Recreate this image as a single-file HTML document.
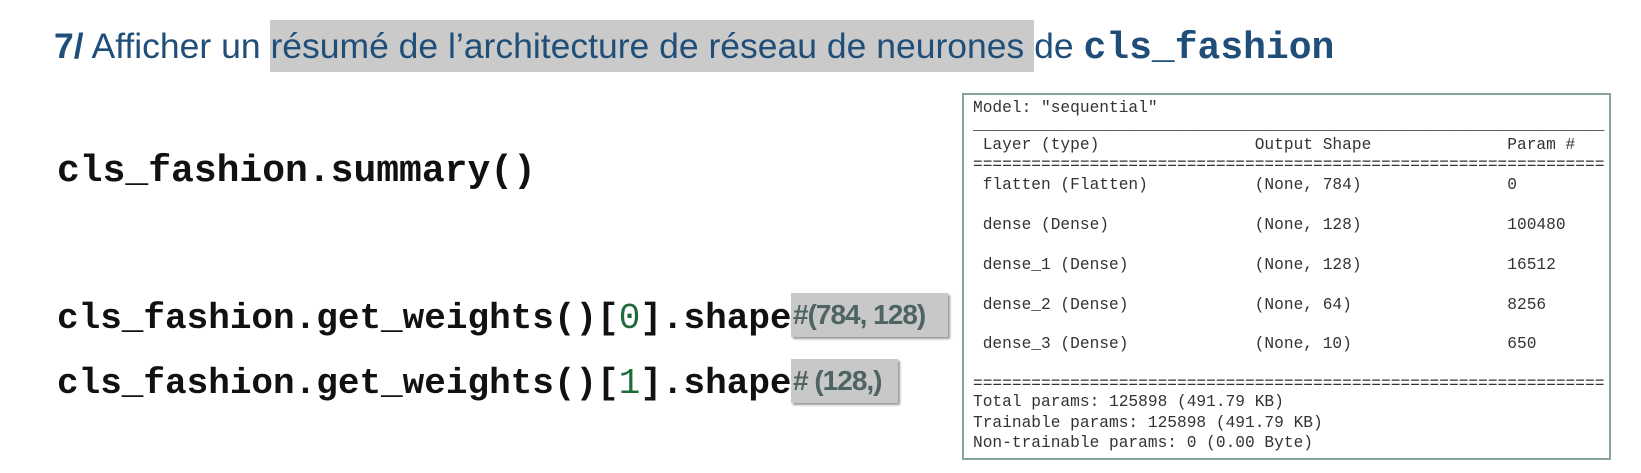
<!DOCTYPE html>
<html><head><meta charset="utf-8"><style>
body{margin:0;width:1641px;height:473px;background:#fff;position:relative;overflow:hidden}
.t{position:absolute;left:54px;top:17px;font-family:"Liberation Sans",sans-serif;font-size:35.5px;color:#1f4e79;white-space:nowrap;line-height:58px}
.hl{background:#cacaca;padding:6px 0}
.t code{font-family:"Liberation Mono",monospace;font-weight:bold;font-size:38px}
.c{position:absolute;left:57px;font-family:"Liberation Mono",monospace;font-weight:bold;color:#111;white-space:nowrap;font-size:36px}
.g{color:#1e6b3c;font-weight:normal}
.cm{position:absolute;background:#c8c8c8;box-shadow:2px 2px 2px #999;font-family:"Liberation Sans",sans-serif;font-weight:bold;color:#4e6463;font-size:28px;line-height:44px;white-space:nowrap;letter-spacing:-1px;padding:0 2px}
.box{position:absolute;left:962px;top:93px;width:645px;height:363px;border:2px solid #86a39d;font-family:"Liberation Mono",monospace;font-size:16.2px;color:#333}
.box div{position:absolute;left:9px;white-space:pre;line-height:20px}
</style></head><body>
<div class="t"><b>7/</b> Afficher un <span class="hl">résumé de l’architecture de réseau de neurones </span>de <code>cls_fashion</code></div>
<div class="c" style="top:150px;font-size:38px">cls_fashion.summary()</div>
<div class="c" style="top:298px">cls_fashion.get_weights()[<span class="g">0</span>].shape</div>
<div class="c" style="top:363px">cls_fashion.get_weights()[<span class="g">1</span>].shape</div>
<div class="cm" style="left:791px;top:293px;width:153px">#(784, 128)</div>
<div class="cm" style="left:791px;top:359px;width:103px"># (128,)</div>
<div class="box">
<div style="top:3px">Model: "sequential"</div>
<div style="top:20px">_________________________________________________________________</div>
<div style="top:40px"> Layer (type)                Output Shape              Param #   </div>
<div style="top:60px">=================================================================</div>
<div style="top:80px"> flatten (Flatten)           (None, 784)               0         </div>
<div style="top:120px"> dense (Dense)               (None, 128)               100480    </div>
<div style="top:160px"> dense_1 (Dense)             (None, 128)               16512     </div>
<div style="top:200px"> dense_2 (Dense)             (None, 64)                8256      </div>
<div style="top:239px"> dense_3 (Dense)             (None, 10)                650       </div>
<div style="top:279px">=================================================================</div>
<div style="top:297px">Total params: 125898 (491.79 KB)</div>
<div style="top:318px">Trainable params: 125898 (491.79 KB)</div>
<div style="top:338px">Non-trainable params: 0 (0.00 Byte)</div>
</div>
</body></html>
